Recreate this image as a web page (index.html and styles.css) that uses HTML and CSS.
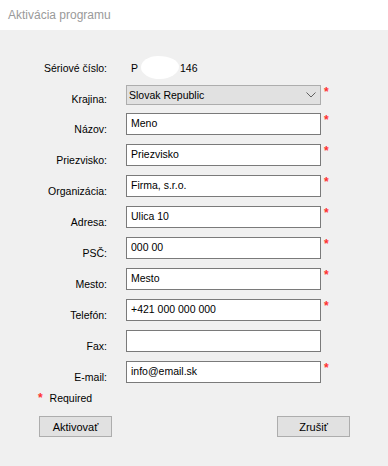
FILE: index.html
```html
<!DOCTYPE html>
<html lang="sk">
<head>
    <meta charset="UTF-8">
    <meta name="viewport" content="width=device-width, initial-scale=1.0">
    <title>Aktivácia programu</title>
    <link rel="stylesheet" href="styles.css">
</head>
<body>
<div class="titlebar">Aktivácia programu</div>

<div class="form">
    <div class="row row-serial">
        <div class="label">Sériové číslo:</div>
        <div class="serial">P<span class="blob"></span>146</div>
    </div>

    <div class="row row-combo">
        <div class="label">Krajina:</div>
        <div class="combo">
            <span>Slovak Republic</span>
            <svg class="chevron" width="10" height="6" viewBox="0 0 10 6">
                <polyline points="0.5,0.5 5,5 9.5,0.5" fill="none" stroke="#606060" stroke-width="1"/>
            </svg>
        </div>
        <div class="req">*</div>
    </div>

    <div class="row">
        <div class="label">Názov:</div>
        <input class="field" type="text" value="Meno">
        <div class="req">*</div>
    </div>
    <div class="row">
        <div class="label">Priezvisko:</div>
        <input class="field" type="text" value="Priezvisko">
        <div class="req">*</div>
    </div>
    <div class="row">
        <div class="label">Organizácia:</div>
        <input class="field" type="text" value="Firma, s.r.o.">
        <div class="req">*</div>
    </div>
    <div class="row">
        <div class="label">Adresa:</div>
        <input class="field" type="text" value="Ulica 10">
        <div class="req">*</div>
    </div>
    <div class="row">
        <div class="label">PSČ:</div>
        <input class="field" type="text" value="000 00">
        <div class="req">*</div>
    </div>
    <div class="row">
        <div class="label">Mesto:</div>
        <input class="field" type="text" value="Mesto">
        <div class="req">*</div>
    </div>
    <div class="row">
        <div class="label">Telefón:</div>
        <input class="field" type="text" value="+421 000 000 000">
        <div class="req">*</div>
    </div>
    <div class="row">
        <div class="label">Fax:</div>
        <input class="field" type="text" value="">
    </div>
    <div class="row">
        <div class="label">E-mail:</div>
        <input class="field" type="text" value="info@email.sk">
        <div class="req">*</div>
    </div>

    <div class="required-note"><span class="req">*</span> Required</div>

    <div class="buttons">
        <button class="btn">Aktivovať</button>
        <button class="btn">Zrušiť</button>
    </div>
</div>
</body>
</html>
```

FILE: styles.css
```css
body {
    margin: 0;
    background-color: #f0f0f0;
    font-family: 'Liberation Sans', Arial, sans-serif;
    font-size: 10.5px;
    color: #000;
    height: 466px;
}
.titlebar {
    height: 30px;
    line-height: 30px;
    background-color: #fff;
    color: #9a9a9a;
    font-size: 12px;
    padding-left: 8px;
}
.form {
    padding-top: 32px;
}
.row {
    display: grid;
    grid-template-columns: 107px 195px auto;
    column-gap: 19px;
    height: 22px;
    margin-bottom: 9px;
}
.row-serial {
    height: 12px;
    margin-bottom: 11px;
}
.row-combo {
    height: 20px;
    margin-bottom: 8px;
}
.label {
    text-align: right;
    align-self: end;
    line-height: 12px;
}
.serial {
    align-self: end;
    line-height: 12px;
    padding-left: 5px;
}
/* white smudge that hides part of the serial number */
.blob {
    display: inline-block;
    width: 38px;
    height: 23px;
    margin: -6px 1px -5px 3px;
    vertical-align: top;
    background: #fff;
    border-radius: 45% 55% 50% 50% / 50% 45% 55% 50%;
}
.combo {
    box-sizing: border-box;
    height: 20px;
    border: 1px solid #adadad;
    background-color: #e1e1e1;
    display: flex;
    align-items: center;
    justify-content: space-between;
    padding: 0 4px 1px 2px;
    line-height: 12px;
}
.chevron {
    display: block;
}
.field {
    box-sizing: border-box;
    height: 22px;
    margin: 0;
    border: 1px solid #7a7a7a;
    background-color: #fff;
    font-family: inherit;
    font-size: inherit;
    color: #000;
    padding: 0 4px 3px 4px;
    outline: none;
}
.req {
    color: #ff3030;
    font-size: 12px;
    font-weight: bold;
    line-height: 12px;
    margin-left: -16px;
    margin-top: 1px;
}
.required-note {
    line-height: 12px;
    padding-left: 38px;
}
.required-note .req {
    margin: 0 4px 0 0;
}
.buttons {
    display: flex;
    justify-content: space-between;
    padding: 0 38px 0 39px;
    margin-top: 12px;
}
.btn {
    width: 73px;
    height: 21px;
    padding: 0;
    border: 1px solid #adadad;
    background-color: #e1e1e1;
    font-family: inherit;
    font-size: 11px;
    color: #000;
}
```
